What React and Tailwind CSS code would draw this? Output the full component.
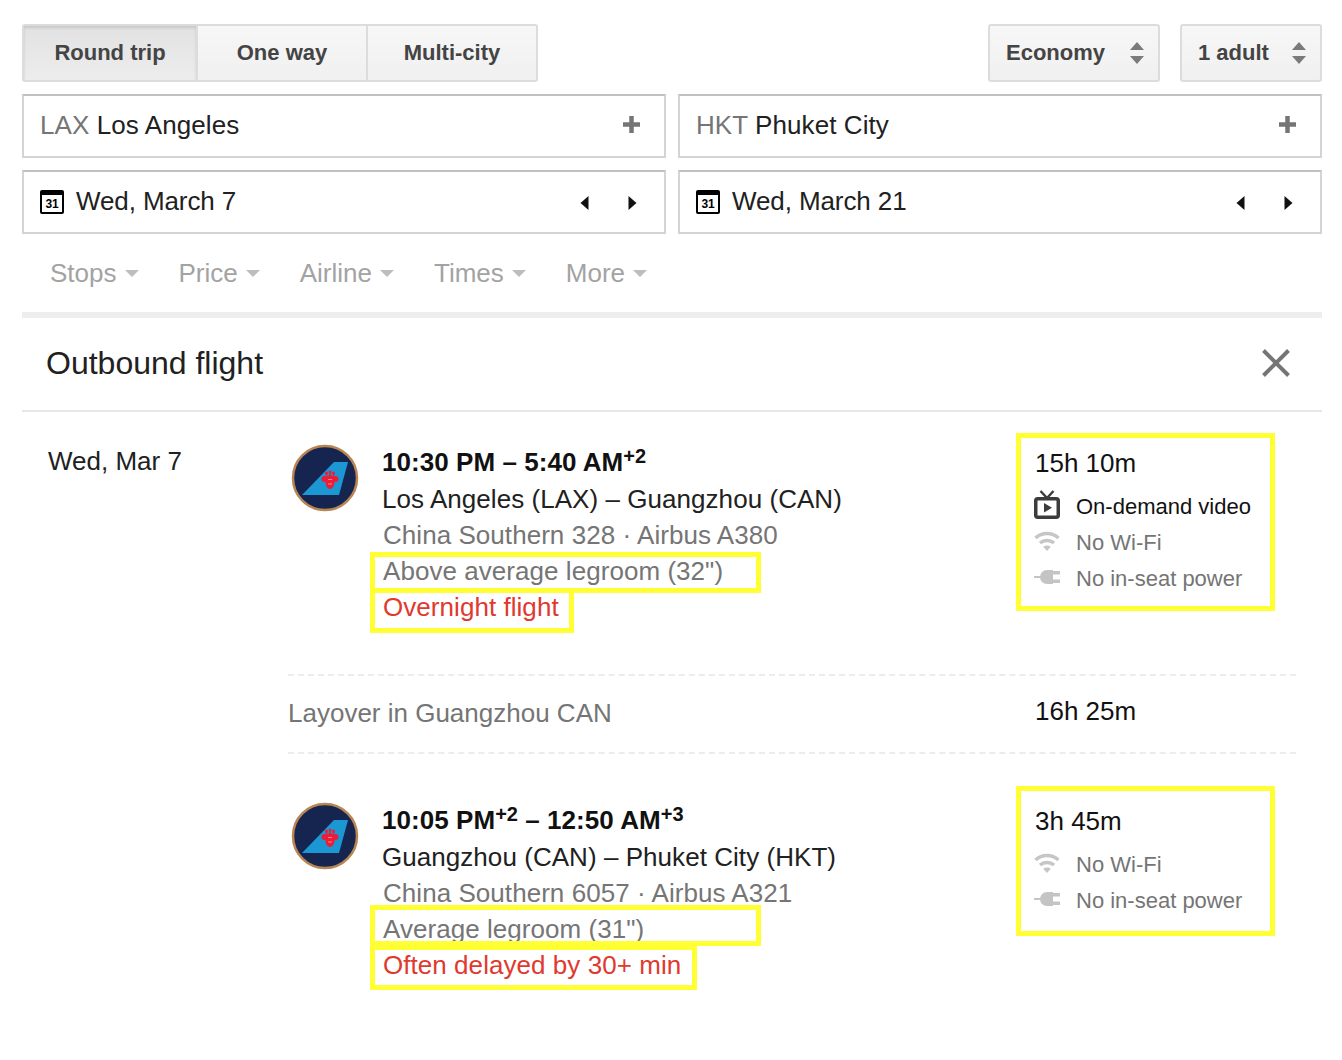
import React from 'react';

const Stepper = () => (
  <svg width="16" height="24" viewBox="0 0 16 24" className="shrink-0">
    <path d="M8 1l7 8H1z" fill="#7a7a7a" />
    <path d="M1 15h14l-7 8z" fill="#7a7a7a" />
  </svg>
);

const SelectBox = ({ label, width }) => (
  <button
    type="button"
    className={`flex h-full items-center justify-between rounded-[3px] border-2 border-[#dcdcdc] bg-gradient-to-b from-[#f7f7f7] to-[#f0f0f0] pl-4 pr-[13px] text-[22px] font-bold text-[#444] ${width}`}
  >
    <span className="pb-0.5">{label}</span>
    <Stepper />
  </button>
);

const Plus = () => (
  <svg width="17" height="17" viewBox="0 0 17 17" className="mb-[3px] shrink-0">
    <path d="M6.250 0h4.500v6.250H17v4.500h-6.250V17h-4.500v-6.250H0v-4.500h6.250z" fill="#757575" />
  </svg>
);

const PlaceField = ({ code, city }) => (
  <div className="flex h-16 items-center justify-between border-2 border-[#d4d4d4] border-t-[#c0c0c0] pl-4 pr-6 text-[26px]">
    <span className="pb-0.5 tracking-[0.08px] text-[#212121]">
      <span className="text-[#757575]">{code}</span> {city}
    </span>
    <Plus />
  </div>
);

const CalendarIcon = () => (
  <span className="mt-0.5 flex h-6 w-6 shrink-0 items-end justify-center rounded-[2px] border-2 border-t-[5px] border-black pb-px text-[12px] leading-[14px] font-bold text-black">
    31
  </span>
);

const DateField = ({ label }) => (
  <div className="flex h-16 items-center justify-between border-2 border-[#d4d4d4] border-t-[#c0c0c0] pl-4 pr-[27px] text-[26px] text-[#212121]">
    <span className="flex items-center gap-3 pb-0.5 tracking-[-0.1px]">
      <CalendarIcon />
      {label}
    </span>
    <span className="mt-0.5 flex items-center gap-[39px]">
      <svg width="9" height="14" viewBox="0 0 9 14"><path d="M8.500 0v14L0.500 7z" fill="#111" /></svg>
      <svg width="9" height="14" viewBox="0 0 9 14"><path d="M0.500 0v14l8-7z" fill="#111" /></svg>
    </span>
  </div>
);

const Filter = ({ label }) => (
  <span className="flex items-center gap-2 text-[26px] text-[#a3a3a3]">
    {label}
    <svg width="14" height="7" viewBox="0 0 14 7"><path d="M0 0h14L7 7z" fill="#bdbdbd" /></svg>
  </span>
);

const AirlineLogo = () => (
  <svg width="68" height="68" viewBox="0 0 68 68" className="shrink-0">
    <circle cx="34" cy="34" r="32" fill="#16254f" stroke="#b98554" strokeWidth="2.500" />
    <path d="M11 51L43 18H57L48 51z" fill="#1b97d4" />
    <g fill="#ee1c35">
      <ellipse cx="39" cy="38" rx="4.500" ry="7" />
      <circle cx="33.500" cy="35" r="3" />
      <circle cx="44.500" cy="35" r="3" />
      <rect x="34.800" y="29" width="1.500" height="5" />
      <rect x="38.200" y="28" width="1.600" height="5" />
      <rect x="41.700" y="29" width="1.500" height="5" />
      <circle cx="35.500" cy="29" r="1.500" />
      <circle cx="39" cy="28" r="1.500" />
      <circle cx="42.500" cy="29" r="1.500" />
    </g>
    <path d="M37 35.500h4M37 40h4" stroke="#f9a0ac" strokeWidth="0.800" />
  </svg>
);

const TvIcon = () => (
  <svg width="26" height="30" viewBox="0 0 26 30">
    <path d="M6.500 1l6.500 7 6.500-7" fill="none" stroke="#3c3c3c" strokeWidth="2.400" />
    <rect x="1.750" y="8.750" width="22.500" height="18.500" rx="2" fill="none" stroke="#3c3c3c" strokeWidth="3.500" />
    <path d="M10 13v9.500l8-4.750z" fill="#3c3c3c" />
  </svg>
);

const WifiIcon = () => (
  <svg width="26" height="22" viewBox="0 0 26 22" fill="none" stroke="#c6c6c6" strokeWidth="3.500">
    <path d="M1.500 8c6.500-6 16.500-6 23 0" />
    <path d="M6 13c4-3.500 10-3.500 14 0" />
    <path d="M13 21l-3.800-4.300c2.200-1.600 5.400-1.600 7.600 0z" fill="#c6c6c6" stroke="none" />
  </svg>
);

const PlugIcon = () => (
  <svg width="26" height="14" viewBox="0 0 26 14">
    <path d="M0 6h7V8H0z" fill="#c4c4c4" />
    <path d="M6 7a7 7 0 0 1 7-7h6v14h-6a7 7 0 0 1-7-7z" fill="#c4c4c4" />
    <path d="M19 1h7v3.500h-7zM19 9.500h7V13h-7z" fill="#c4c4c4" />
  </svg>
);

const Amenity = ({ icon, label, muted }) => (
  <div className={`flex h-9 items-center text-[22px] ${muted ? 'text-[#757575]' : 'text-[#111]'}`}>
    <span className="-ml-px flex w-[42px] shrink-0 items-center pb-0.5">{icon}</span>
    {label}
  </div>
);

const FlightRow = ({ times, route, carrier, legroom, warning, duration, amenities }) => (
  <div className="flex">
    <div className="w-[94px] shrink-0 pl-[3px] pt-px">
      <AirlineLogo />
    </div>
    <div className="w-[653px] shrink-0 text-[26px] leading-9 tracking-[0.05px]">
      <div className="h-[38px] leading-[39px] font-bold text-[#111]">{times}</div>
      <div className="text-[#212121]">{route}</div>
      <div className="pl-px text-[#757575]">{carrier}</div>
      <div className="pl-px text-[#757575]">{legroom}</div>
      <div className="pl-px text-[#e0392e]">{warning}</div>
    </div>
    <div>
      <div className="mb-[5px] text-[26px] leading-10 text-[#111]">{duration}</div>
      {amenities}
    </div>
  </div>
);

const Sup = ({ children }) => <sup className="top-[-8px] align-baseline text-[20px] leading-none">{children}</sup>;

// yellow annotation boxes drawn over the screenshot
const Mark = ({ className }) => (
  <div className={`pointer-events-none absolute border-[5px] border-[#ffff33] ${className}`} />
);

export default function App() {
  return (
    <div className="relative min-h-[1060px] w-[1342px] overflow-hidden bg-white pl-[22px] pr-5 pt-6 [font-family:'Liberation_Sans',Arial,sans-serif]">
      <div className="flex h-[58px] justify-between">
        <div className="flex h-full rounded-[3px] border-2 border-[#dcdcdc] text-[22px] font-bold text-[#444]">
          <button type="button" className="w-[172px] bg-gradient-to-b from-[#e2e2e2] to-[#ededed] pb-0.5 shadow-[inset_0_2px_3px_rgba(0,0,0,0.12)]">Round trip</button>
          <button type="button" className="w-[170px] border-l-2 border-[#dcdcdc] bg-gradient-to-b from-[#f7f7f7] to-[#f0f0f0] pb-0.5">One way</button>
          <button type="button" className="w-[170px] border-l-2 border-[#dcdcdc] bg-gradient-to-b from-[#f7f7f7] to-[#f0f0f0] pb-0.5">Multi-city</button>
        </div>
        <div className="flex h-full gap-5">
          <SelectBox label="Economy" width="w-[172px]" />
          <SelectBox label="1 adult" width="w-[142px]" />
        </div>
      </div>

      <div className="mt-3 grid grid-cols-2 gap-3">
        <PlaceField code="LAX" city="Los Angeles" />
        <PlaceField code="HKT" city="Phuket City" />
        <DateField label="Wed, March 7" />
        <DateField label="Wed, March 21" />
      </div>

      <div className="flex h-[78px] items-center gap-10 pl-7">
        <Filter label="Stops" />
        <Filter label="Price" />
        <Filter label="Airline" />
        <Filter label="Times" />
        <Filter label="More" />
      </div>

      <div className="flex h-[100px] items-center justify-between border-t-[6px] border-b-2 border-t-[#eeeeee] border-b-[#e8e8e8] pb-[3px] pl-6 pr-[31px]">
        <h1 className="text-[32px] font-normal text-[#212121]">Outbound flight</h1>
        <svg width="30" height="30" viewBox="0 0 30 30">
          <path d="M2.500 2.500l25 25M27.500 2.500l-25 25" stroke="#757575" strokeWidth="4" />
        </svg>
      </div>

      <div className="flex pt-[31px]">
        <div className="w-[266px] shrink-0 pl-[26px] text-[26px] leading-9 text-[#212121]">Wed, Mar 7</div>
        <div className="w-[1008px] shrink-0">
          <FlightRow
            times={<>10:30 PM – 5:40 AM<Sup>+2</Sup></>}
            route="Los Angeles (LAX) – Guangzhou (CAN)"
            carrier="China Southern 328 · Airbus A380"
            legroom={'Above average legroom (32")'}
            warning="Overnight flight"
            duration="15h 10m"
            amenities={
              <>
                <Amenity icon={<TvIcon />} label="On-demand video" />
                <Amenity icon={<WifiIcon />} label="No Wi-Fi" muted />
                <Amenity icon={<PlugIcon />} label="No in-seat power" muted />
              </>
            }
          />

          <div className="mt-[49px] flex h-20 items-center border-y-2 border-dashed border-[#ececec] pb-0.5 text-[26px] text-[#757575]">
            <span className="w-[747px] shrink-0">Layover in Guangzhou CAN</span>
            <span className="-mt-1 text-[#111]">16h 25m</span>
          </div>

          <div className="pt-[47px]">
            <FlightRow
              times={<>10:05 PM<Sup>+2</Sup> – 12:50 AM<Sup>+3</Sup></>}
              route="Guangzhou (CAN) – Phuket City (HKT)"
              carrier="China Southern 6057 · Airbus A321"
              legroom={'Average legroom (31")'}
              warning="Often delayed by 30+ min"
              duration="3h 45m"
              amenities={
                <>
                  <Amenity icon={<WifiIcon />} label="No Wi-Fi" muted />
                  <Amenity icon={<PlugIcon />} label="No in-seat power" muted />
                </>
              }
            />
          </div>
        </div>
      </div>

      <Mark className="left-[370px] top-[552px] h-[41px] w-[391px]" />
      <Mark className="left-[370px] top-[588px] h-[45px] w-[204px]" />
      <Mark className="left-[1016px] top-[433px] h-[178px] w-[259px]" />
      <Mark className="left-[370px] top-[905px] h-[41px] w-[391px]" />
      <Mark className="left-[370px] top-[945px] h-[45px] w-[327px]" />
      <Mark className="left-[1016px] top-[786px] h-[150px] w-[259px]" />
    </div>
  );
}
